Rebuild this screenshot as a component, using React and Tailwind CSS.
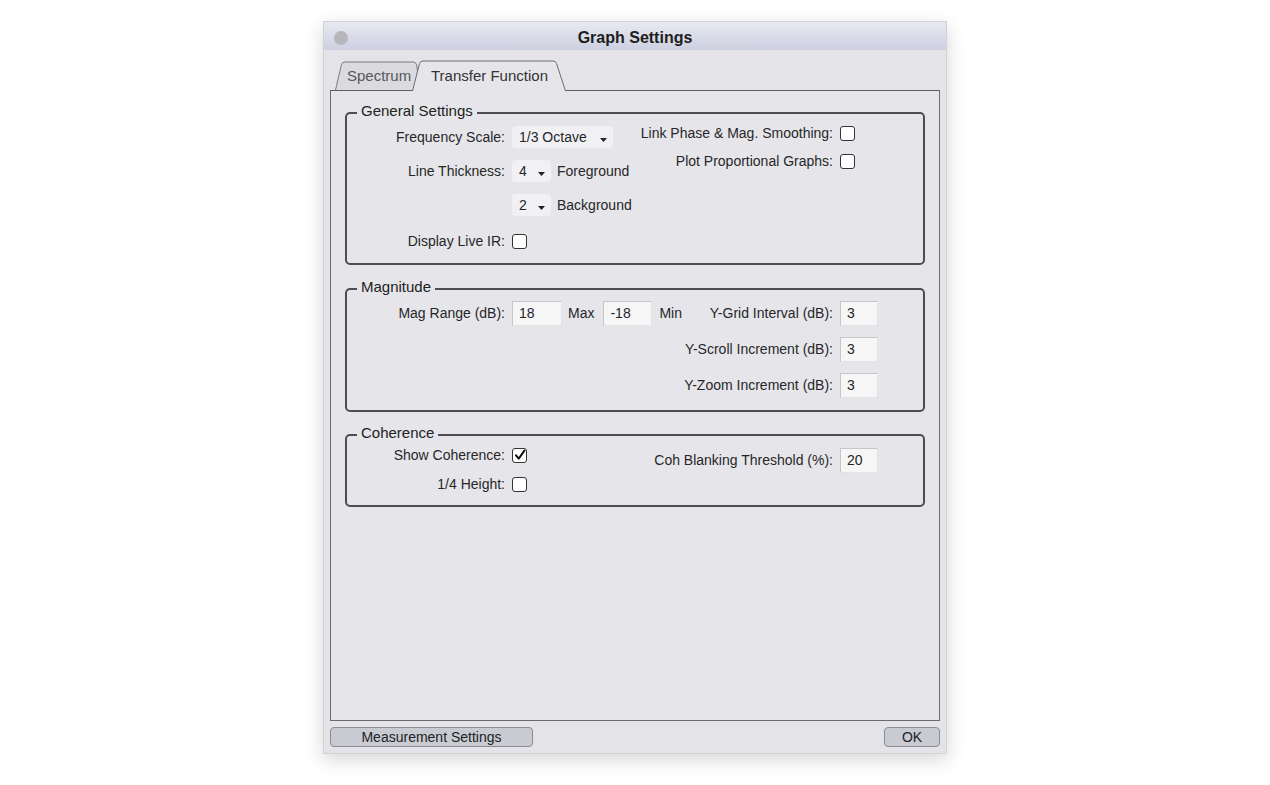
import React from "react";

const Check = ({ checked }) => (
  <div className="flex h-[15px] w-[15px] items-center justify-center rounded-[3px] border-[1.5px] border-[#333336] bg-white">
    {checked && (
      <svg viewBox="0 0 12 12" className="h-[12px] w-[12px]">
        <path d="M2 6.3 L4.8 9.6 L10.4 1.6" fill="none" stroke="#111" strokeWidth="2" strokeLinecap="round" strokeLinejoin="round" />
      </svg>
    )}
  </div>
);

const Select = ({ value, w }) => (
  <div className={`relative flex h-[22px] items-center rounded-[4px] bg-[#f1f1f4] pl-[7px] ${w}`}>
    <span>{value}</span>
    <svg className="absolute right-[6px] top-[12px]" width="7" height="4" viewBox="0 0 7 4">
      <path d="M0 0 H7 L3.5 4 Z" fill="#222" />
    </svg>
  </div>
);

const Field = ({ value, w }) => (
  <div className={`flex h-[25px] items-center border border-t-[#c6c6ca] border-l-[#c6c6ca] border-r-[#e4e4e8] border-b-[#e4e4e8] bg-[#f6f6f7] pl-[6px] ${w}`}>
    {value}
  </div>
);

const Label = ({ children }) => (
  <div className="w-[165px] whitespace-nowrap pr-[7px] text-right">{children}</div>
);

const RightRow = ({ label, children, h }) => (
  <div className={`flex items-center justify-end ${h}`}>
    <div className="whitespace-nowrap pr-[7px]">{label}</div>
    <div className="w-[83px]">{children}</div>
  </div>
);

const Group = ({ title, children, className }) => (
  <div className={`relative rounded-[5px] border-2 border-[#4d4d52] ${className}`}>
    <span className="absolute left-[10px] top-[-12px] bg-[#e6e6ea] px-[4px] text-[15px] leading-[17px] text-[#222]">
      {title}
    </span>
    {children}
  </div>
);

export default function App() {
  return (
    <div className="h-[785px] w-full bg-white pt-[21px] font-['Liberation_Sans',Arial,sans-serif] text-[14px] text-[#262628]">
      <div className="mx-auto flex h-[733px] w-[624px] flex-col border border-[#d2d2d6] bg-[#e4e4e8] shadow-[0_6px_18px_rgba(0,0,0,0.16)]">
        {/* title bar */}
        <div className="relative flex h-[30px] items-center justify-center bg-gradient-to-b from-[#e8e9f0] to-[#cdd0e1] pt-[4px]">
          <div className="absolute left-[10px] top-[9px] h-[14px] w-[14px] rounded-full bg-[#b6b6bc]" />
          <span className="text-[16px] font-bold text-[#1e1e20]">Graph Settings</span>
        </div>

        <div className="flex flex-1 flex-col px-[6px] pt-[10px] pb-[6px]">
          {/* tabs */}
          <div className="relative z-10 flex h-[31px] items-end pl-[5px]">
            <div className="relative mb-[1px] h-[29px] w-[86px]">
              <svg className="absolute inset-0" width="86" height="29" viewBox="0 0 86 29">
                <path d="M0.5 29 L6.5 3.5 Q7.2 1 10 1 L78 1 Q80.7 1 81.5 3.5 L85.5 29" fill="#dadadf" stroke="#7a7a80" strokeWidth="1" />
              </svg>
              <span className="relative flex h-full items-center pl-[12px] pt-[2px] text-[15px] text-[#58585c]">Spectrum</span>
            </div>
            <div className="relative ml-[-9px] h-[31px] w-[154px]">
              <svg className="absolute inset-0" width="154" height="31" viewBox="0 0 154 31">
                <path d="M0.5 31 L7.5 3.5 Q8.3 1 11 1 L141 1 Q143.7 1 144.5 3.5 L153.5 31" fill="#e6e6ea" stroke="#6c6c70" strokeWidth="1" />
              </svg>
              <span className="relative flex h-full items-center pl-[19px] pt-[2px] text-[15px] text-[#333336]">Transfer Function</span>
            </div>
          </div>

          {/* panel */}
          <div className="-mt-[1px] flex h-[631px] flex-col border border-[#6a6a6f] border-t-[#5e5e63] bg-[#e6e6ea] px-[14px] pt-[21px]">
            <Group title="General Settings">
              <div className="flex">
                <div className="flex flex-col pt-[12px] pb-[11px]">
                  <div className="flex h-[22px] items-center">
                    <Label>Frequency Scale:</Label>
                    <Select value="1/3 Octave" w="w-[101px]" />
                  </div>
                  <div className="mt-[12px] flex h-[22px] items-center">
                    <Label>Line Thickness:</Label>
                    <Select value="4" w="w-[39px]" />
                    <span className="ml-[6px]">Foreground</span>
                  </div>
                  <div className="mt-[12px] flex h-[22px] items-center">
                    <Label></Label>
                    <Select value="2" w="w-[39px]" />
                    <span className="ml-[6px]">Background</span>
                  </div>
                  <div className="mt-[14px] flex h-[22px] items-center">
                    <Label>Display Live IR:</Label>
                    <Check />
                  </div>
                </div>
                <div className="flex flex-1 flex-col pt-[8px]">
                  <RightRow label="Link Phase & Mag. Smoothing:" h="h-[22px]">
                    <Check />
                  </RightRow>
                  <div className="mt-[6px]">
                    <RightRow label="Plot Proportional Graphs:" h="h-[22px]">
                      <Check />
                    </RightRow>
                  </div>
                </div>
              </div>
            </Group>

            <Group title="Magnitude" className="mt-[23px]">
              <div className="flex">
                <div className="flex flex-col pt-[11px]">
                  <div className="flex h-[25px] items-center">
                    <Label>Mag Range (dB):</Label>
                    <Field value="18" w="w-[50px]" />
                    <span className="ml-[6px] mr-[9px]">Max</span>
                    <Field value="-18" w="w-[49px]" />
                    <span className="ml-[7px]">Min</span>
                  </div>
                </div>
                <div className="flex flex-1 flex-col gap-[11px] pt-[11px] pb-[12px]">
                  <RightRow label="Y-Grid Interval (dB):" h="h-[25px]">
                    <Field value="3" w="w-[38px]" />
                  </RightRow>
                  <RightRow label="Y-Scroll Increment (dB):" h="h-[25px]">
                    <Field value="3" w="w-[38px]" />
                  </RightRow>
                  <RightRow label="Y-Zoom Increment (dB):" h="h-[25px]">
                    <Field value="3" w="w-[38px]" />
                  </RightRow>
                </div>
              </div>
            </Group>

            <Group title="Coherence" className="mt-[22px]">
              <div className="flex">
                <div className="flex flex-col pt-[8px] pb-[10px]">
                  <div className="flex h-[22px] items-center">
                    <Label>Show Coherence:</Label>
                    <Check checked />
                  </div>
                  <div className="mt-[7px] flex h-[22px] items-center">
                    <Label>1/4 Height:</Label>
                    <Check />
                  </div>
                </div>
                <div className="flex flex-1 flex-col pt-[12px]">
                  <RightRow label="Coh Blanking Threshold (%):" h="h-[25px]">
                    <Field value="20" w="w-[38px]" />
                  </RightRow>
                </div>
              </div>
            </Group>
          </div>

          {/* bottom buttons */}
          <div className="mt-[6px] flex h-[20px] items-center justify-between">
            <button className="flex h-[20px] w-[203px] items-center justify-center rounded-[4px] border border-[#8c8c92] bg-[#c9cbd2] text-[14px] text-[#222]">
              Measurement Settings
            </button>
            <button className="flex h-[20px] w-[56px] items-center justify-center rounded-[4px] border border-[#8c8c92] bg-[#c9cbd2] text-[14px] text-[#222]">
              OK
            </button>
          </div>
        </div>
      </div>
    </div>
  );
}
